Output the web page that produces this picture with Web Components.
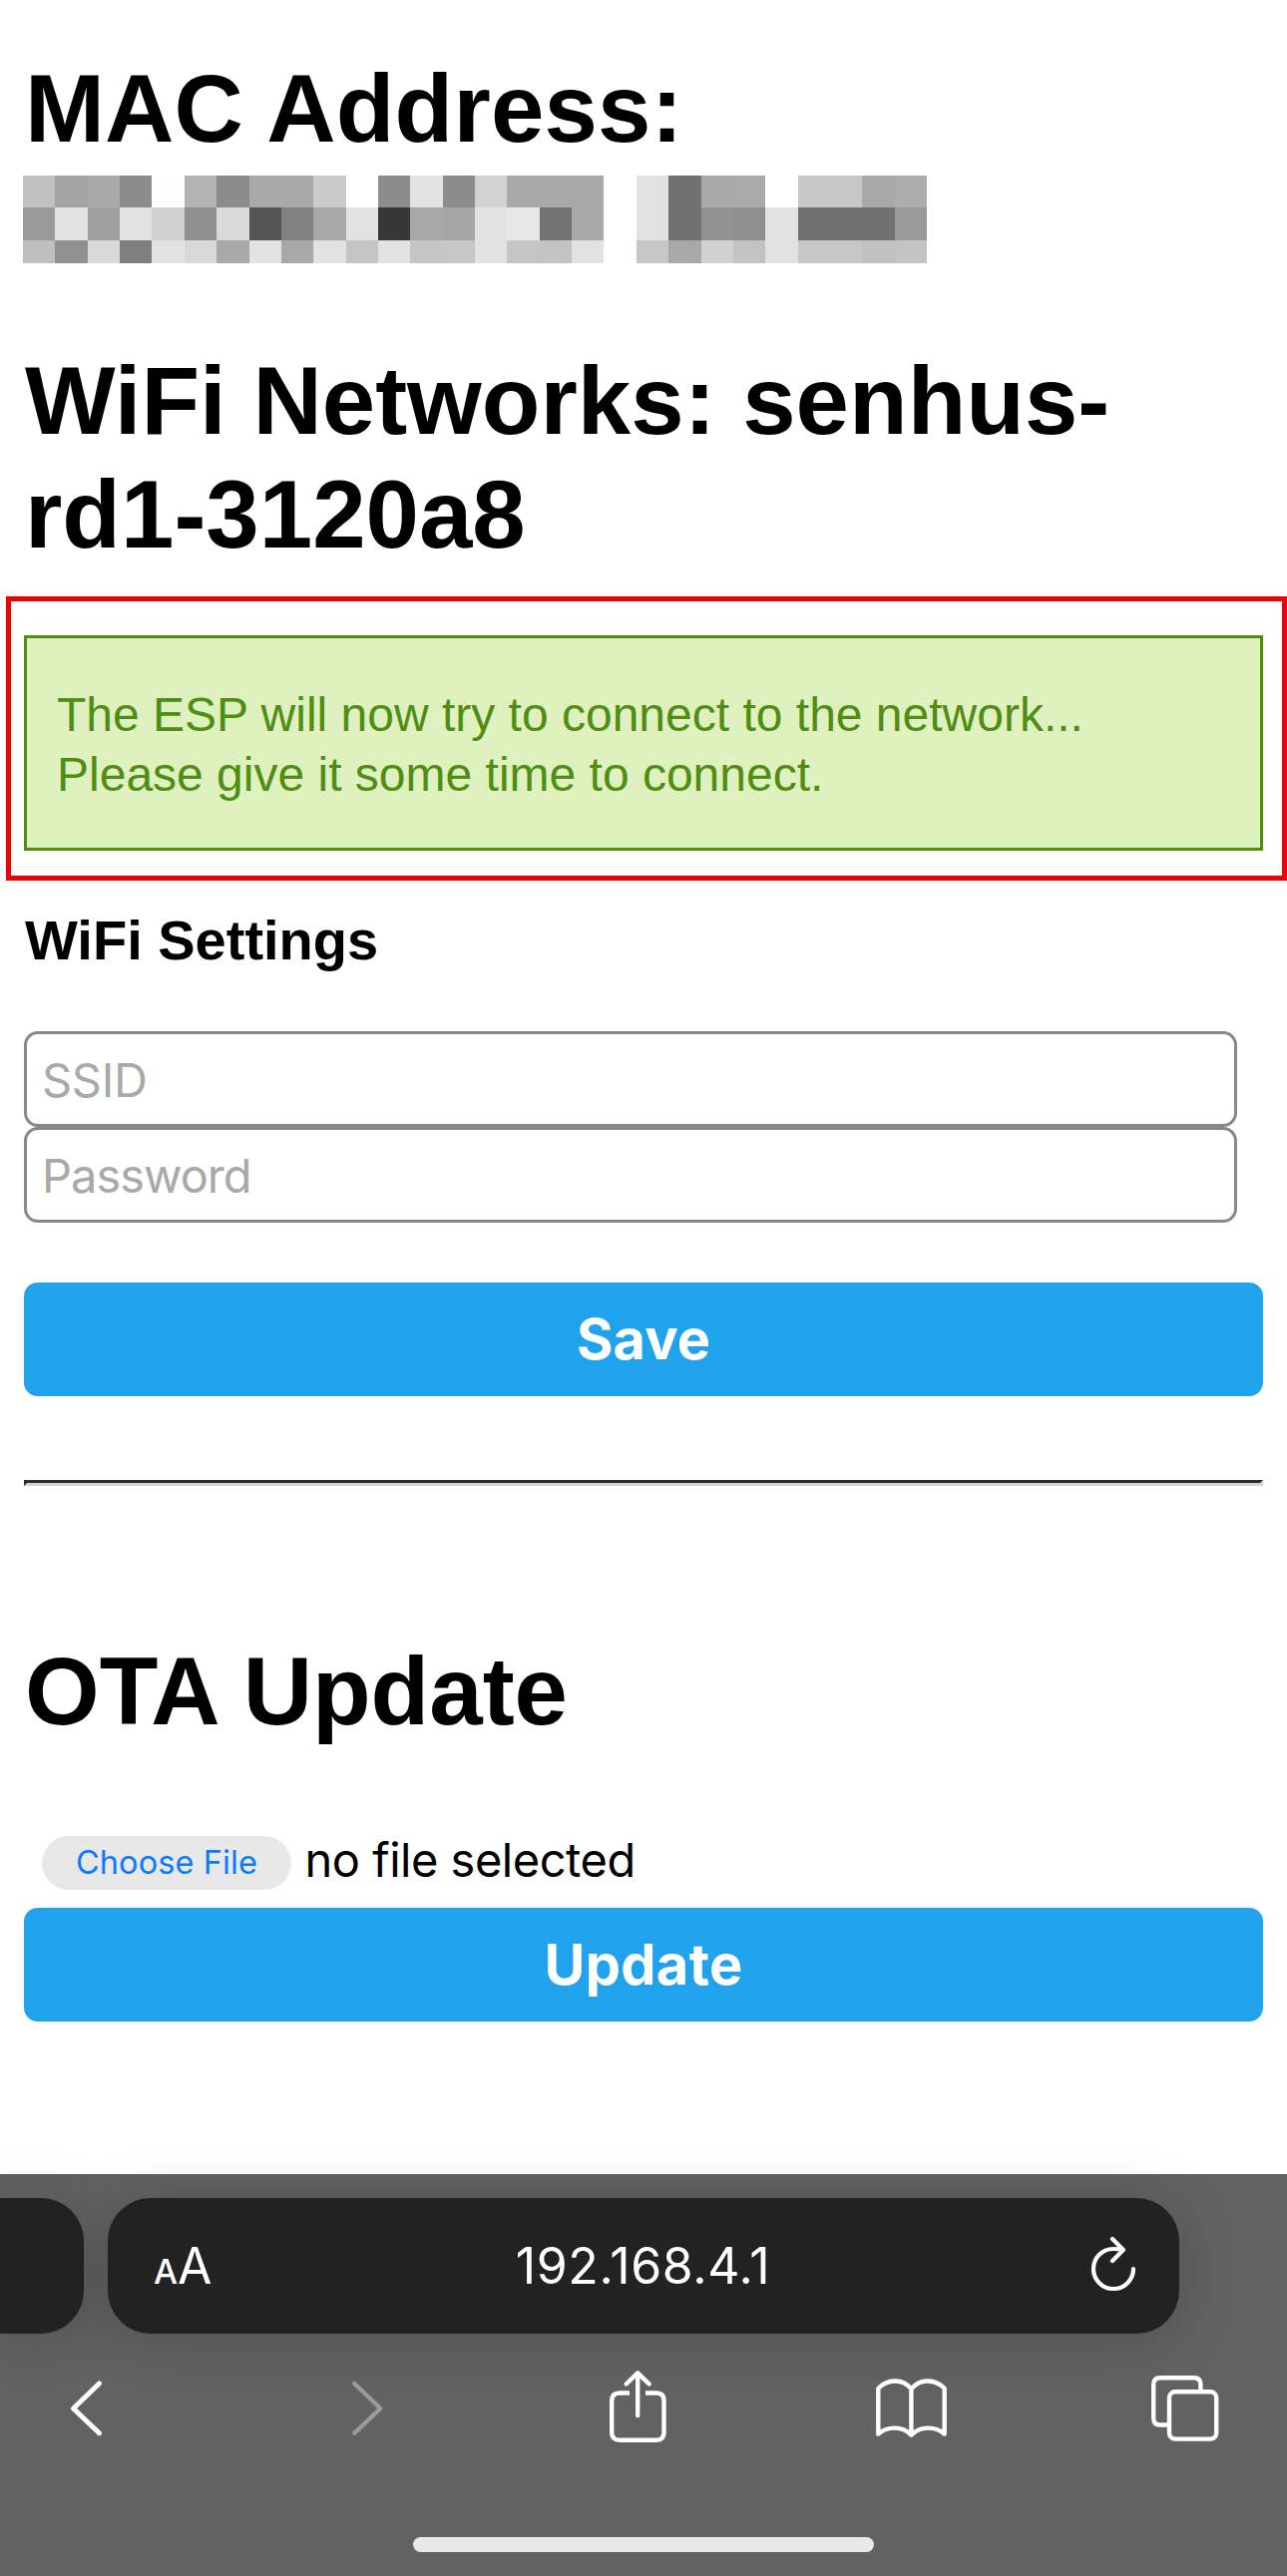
<!DOCTYPE html>
<html lang="en">
<head>
<meta charset="utf-8">
<title>WiFi Networks</title>
<style>
html,body{margin:0;padding:0;background:#fff}
body{width:1290px;height:2583px;overflow:hidden;font-family:"Liberation Sans",Arial,sans-serif;color:#000}
</style>
</head>
<body>
<device-page></device-page>
<script>
const define = (name, html, init) => customElements.define(name, class extends HTMLElement {
  constructor() {
    super();
    this.attachShadow({ mode: 'open' }).innerHTML = html;
  }
  connectedCallback() { if (init) init.call(this, this.shadowRoot); }
});

define('page-title', `<style>
:host{display:block;padding:0 24px 0 25px;font-size:96px;line-height:114px;font-weight:700}
h1{margin:0;font:inherit}
</style><h1><slot></slot></h1>`);

define('redacted-strip', `<style>
:host{display:block;margin:10px 0 0 23px;height:88px}
svg{display:block}
</style><svg width="906" height="88" shape-rendering="crispEdges"></svg>`, function (root) {
  const rows = [
    'c2 a4 a9 8c fd b3 8c a9 a9 cb ff 8c e2 8c d2 a9 a8 a8 ff e2 71 a8 aa ff c6 c6 a8 ad',
    '99 e2 9f e2 cf 8f d9 55 81 a8 e2 37 a8 a5 e2 e7 72 a8 ff e2 71 92 8f e2 71 71 71 9b',
    'bf 90 d9 7e e2 d9 a8 e2 a8 e2 c5 e2 c5 c6 e2 c5 c3 e2 ff c6 a8 d1 c3 e2 c6 c6 c1 c4'
  ];
  const ys = [0, 32, 65, 88];
  const edge = i => Math.round(i * 906 / 28);
  root.querySelector('svg').innerHTML = rows.map((r, y) => r.split(' ').map((c, x) =>
    `<rect x="${edge(x)}" y="${ys[y]}" width="${edge(x + 1) - edge(x)}" height="${ys[y + 1] - ys[y]}" fill="#${c}${c}${c}"/>`).join('')).join('');
});

define('status-message', `<style>
:host{display:block;box-sizing:border-box;margin:25px 0 0 6px;height:285px;border:5px solid #ea0606;padding:34px 19px 25px 13px}
div{box-sizing:border-box;height:216px;border:3px solid #4f8e12;background:#e0f1c0;color:#4f8e12;padding:47px 30px 0;font-size:48px;line-height:60px;white-space:nowrap}
</style><div><slot></slot></div>`);

define('section-title', `<style>
:host{display:block;padding:0 24px 0 25px;margin-top:28px;font-size:56px;line-height:64px;font-weight:700}
h3{margin:0;font:inherit}
</style><h3><slot></slot></h3>`);

define('text-field', `<style>
:host{display:flex;align-items:center;box-sizing:border-box;margin-left:24px;width:1216px;height:96px;border:3px solid #88888c;border-radius:14px;padding:1px 0 0 15px;font-family:Inter,sans-serif;font-size:47px;line-height:1;color:#a9a9a9}
</style><span><slot></slot></span>`);

define('action-button', `<style>
:host{display:flex;align-items:center;justify-content:center;margin:0 24px;height:114px;border-radius:14px;background:#20a2ed;color:#fff;font-family:Inter,sans-serif;font-size:56px;line-height:1;font-weight:700}
</style><span><slot></slot></span>`);

define('file-picker', `<style>
:host{display:flex;align-items:center;height:54px;margin:88px 0 18px 42px;font-family:Inter,sans-serif;line-height:1}
.b{display:flex;align-items:center;justify-content:center;width:250px;height:54px;border-radius:27px;background:#e8e8e9;color:#0a7aff;font-size:32.5px;letter-spacing:.1px}
.t{font-size:47px;letter-spacing:-.48px;margin:-8px 0 0 13.5px;white-space:nowrap}
</style><div class="b">Choose File</div><span class="t">no file selected</span>`);

define('page-rule', `<style>
:host{display:block;margin:84px 24px 149px;border:3px solid;border-color:#2b2b2b #d4d4d4 #d4d4d4 #2b2b2b}
</style>`);

define('address-bar', `<style>
:host{display:flex;gap:24px;padding-top:24px}
.p{background:#222;height:136px;box-shadow:0 6px 60px rgba(0,0,0,.18)}
.prev{width:84px;border-radius:0 43px 43px 0}
.cur{box-sizing:border-box;width:1074px;border-radius:43px;display:flex;align-items:center;justify-content:space-between;padding:0 41px 0 46px;color:#fff;font-family:Inter,sans-serif;line-height:1}
.aa{font-size:50px;display:flex;align-items:baseline;width:64px}
.aa small{font-size:34px;font-weight:500}
.url{font-size:50px;letter-spacing:.65px;margin-right:20px;white-space:nowrap}
svg{display:block}
</style><div class="p prev"></div><div class="p cur"><span class="aa"><small>A</small><span>A</span></span><span class="url"><slot></slot></span>
<svg width="50" height="54" viewBox="1091 2245 50 54" overflow="visible" fill="none" stroke="#fff" stroke-width="4.2" stroke-linecap="round" stroke-linejoin="round"><path d="M1136 2275A20 20 0 1 1 1116 2255Q1121 2255 1125.5 2256M1115 2245L1126 2256L1115 2267"/></svg></div>`);

define('nav-bar', `<style>
:host{display:flex;margin-top:30px;height:90px;padding-left:64px}
svg{display:block;flex:none;fill:none;stroke:#fff;stroke-width:4.4;stroke-linecap:round;stroke-linejoin:round}
</style>
<svg width="44" height="90" viewBox="64 2370 44 90"><path stroke-width="5" d="M99.5 2390L73.5 2415L99.5 2439.7"/></svg>
<svg style="margin-left:238px" width="44" height="90" viewBox="346 2370 44 90"><path style="stroke:#9a9a9a" d="M355.3 2390L381.3 2415L355.3 2439.7"/></svg>
<svg style="margin-left:214px" width="70" height="90" viewBox="604 2370 70 90"><path style="stroke-linecap:butt" d="M631 2399.5H621Q613.2 2399.5 613.2 2407.3V2439Q613.2 2446.7 621 2446.7H658Q665.5 2446.7 665.5 2439V2407.3Q665.5 2399.5 658 2399.5H647"/><path d="M639.2 2380V2422M627.7 2390.5L639.2 2379.3L650.7 2390.5"/></svg>
<svg style="margin-left:198px" width="84" height="90" viewBox="872 2370 84 90"><path d="M880.3 2440.5V2395C890 2385 905 2385 913.4 2395.5C922 2385 937 2385 946.7 2395V2440.5C937 2432.5 922 2432.5 913.4 2441.7C905 2432.5 890 2432.5 880.3 2440.5ZM913.4 2395.5V2441"/></svg>
<svg style="margin-left:192px" width="80" height="90" viewBox="1148 2370 80 90"><path style="stroke-linecap:butt" d="M1170 2431.5H1163Q1156.2 2431.5 1156.2 2424.7V2391Q1156.2 2384.2 1163 2384.2H1196.7Q1203.4 2384.2 1203.4 2391V2397"/><rect x="1172" y="2398.3" width="47.2" height="47.3" rx="6"/></svg>`);

define('home-indicator', `<style>
:host{display:block;width:462px;height:15px;margin:84px 0 0 414px;border-radius:8px;background:#e8e8e8}
</style>`);

define('browser-toolbar', `<style>
:host{display:flex;flex-direction:column;height:403px;background:#626262}
</style><address-bar>192.168.4.1</address-bar><nav-bar></nav-bar><home-indicator></home-indicator>`);

define('device-page', `<style>
:host{display:block}
main{display:flex;flex-direction:column;box-sizing:border-box;height:2180px;padding-top:52px}
.mac{letter-spacing:.15px}
.net{margin-top:81px}
.ssid{margin-top:59px;letter-spacing:-.3px}
.pass{letter-spacing:-1px}
.save{margin-top:60px}
.update{letter-spacing:.3px}
</style>
<main>
<page-title class="mac">MAC Address:</page-title>
<redacted-strip></redacted-strip>
<page-title class="net">WiFi Networks: senhus-<br>rd1-3120a8</page-title>
<status-message>The ESP will now try to connect to the network...<br>Please give it some time to connect.</status-message>
<section-title>WiFi Settings</section-title>
<text-field class="ssid">SSID</text-field>
<text-field class="pass">Password</text-field>
<action-button class="save">Save</action-button>
<page-rule></page-rule>
<page-title>OTA Update</page-title>
<file-picker></file-picker>
<action-button class="update">Update</action-button>
</main>
<browser-toolbar></browser-toolbar>`);
</script>
</body>
</html>
